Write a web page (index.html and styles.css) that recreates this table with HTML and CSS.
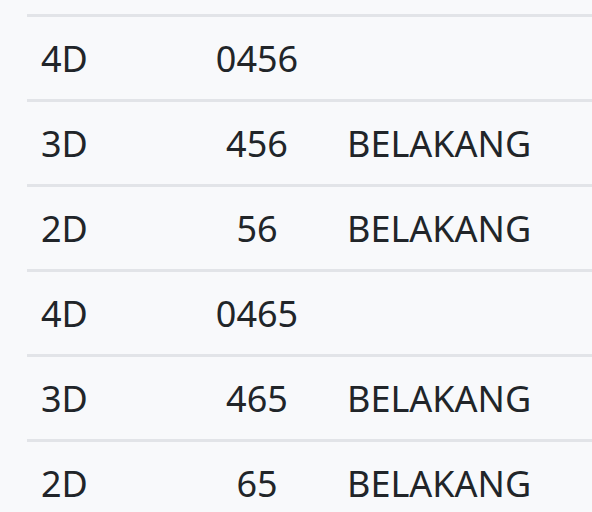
FILE: index.html
```html
<!DOCTYPE html>
<html>
<head>
<meta charset="utf-8">
<link rel="stylesheet" href="styles.css">
</head>
<body>
<div class="table">
  <div class="row"><div class="c1">4D</div><div class="c2">0456</div><div class="c3"></div></div>
  <div class="row"><div class="c1">3D</div><div class="c2">456</div><div class="c3">BELAKANG</div></div>
  <div class="row"><div class="c1">2D</div><div class="c2">56</div><div class="c3">BELAKANG</div></div>
  <div class="row"><div class="c1">4D</div><div class="c2">0465</div><div class="c3"></div></div>
  <div class="row"><div class="c1">3D</div><div class="c2">465</div><div class="c3">BELAKANG</div></div>
  <div class="row"><div class="c1">2D</div><div class="c2">65</div><div class="c3">BELAKANG</div></div>
</div>
</body>
</html>
```

FILE: styles.css
```css
html, body {
  margin: 0;
  padding: 0;
  background: #f8f9fb;
}
body {
  font-family: "Noto Sans", sans-serif;
  color: #212529;
  overflow: hidden;
}
.table {
  margin: 14px 0 0 27px;
}
.row {
  display: grid;
  grid-template-columns: 140px 180px 1fr;
  align-items: center;
  height: 82px;
  border-top: 3px solid #e2e4e8;
  font-size: 36px;
}
.c1 {
  padding-left: 14px;
}
.c2 {
  text-align: center;
}
```
